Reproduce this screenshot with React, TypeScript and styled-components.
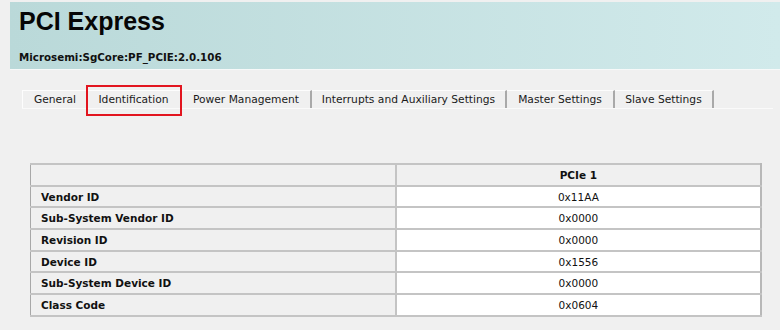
import React from "react";
import styled, { createGlobalStyle } from "styled-components";

const GlobalStyle = createGlobalStyle`
  html, body {
    margin: 0;
    padding: 0;
    background: #f0f0f0;
  }
  * { box-sizing: border-box; }
`;

const Page = styled.div`
  width: 780px;
  height: 330px;
  padding: 2px 0 0 10px;
  background: #f0f0f0;
  overflow: hidden;
`;

const Header = styled.header`
  height: 68px;
  padding: 5px 9px 0;
  background: linear-gradient(to right, #bad9d9, #d1eaeb);
  border-bottom: 1px solid #f7f9f9;
`;

const Title = styled.h1`
  margin: 0;
  font-family: "Liberation Sans", Arial, sans-serif;
  font-weight: bold;
  font-size: 25px;
  line-height: 29px;
  color: #060606;
`;

const Subtitle = styled.div`
  margin-top: 15px;
  font-family: "DejaVu Sans", Verdana, sans-serif;
  font-weight: bold;
  font-size: 10.3px;
  line-height: 13px;
  color: #111;
`;

const TabBar = styled.nav`
  display: flex;
  margin: 20px 0 0 12px;
  width: 751px;
  border-bottom: 1px solid #fafafa;
`;

const Tab = styled.div<{ $w: number; $first?: boolean; $noDivider?: boolean; $selected?: boolean }>`
  position: relative;
  width: ${(p) => p.$w}px;
  height: 18px;
  border-top: 1px solid #fdfdfd;
  border-left: ${(p) => (p.$first ? "1px solid #fdfdfd" : "none")};
  border-right: ${(p) => (p.$noDivider ? "none" : "2px solid #a9a9a9")};
  font-family: "DejaVu Sans", Verdana, sans-serif;
  font-size: 10.7px;
  line-height: 18px;
  color: #1a1a1a;
  text-align: center;
  white-space: nowrap;

  ${(p) =>
    p.$selected &&
    `
    &::after {
      content: "";
      position: absolute;
      top: -6px;
      left: -1px;
      right: -2px;
      bottom: -8px;
      border: 2px solid #e2151f;
      pointer-events: none;
    }
  `}
`;

const Table = styled.table`
  margin: 54px 0 0 20px;
  width: 732px;
  border-collapse: collapse;
  border-left: 1px solid #a8a8a8;
  border-right: 2px solid #b8b8b8;
  border-bottom: 2px solid #c4c4c4;
  border-top: 2px solid #c4c4c4;
  font-family: "DejaVu Sans", Verdana, sans-serif;
  font-size: 10.5px;
  color: #111;
`;

const Row = styled.tr`
  height: 21.7px;
`;

const HeadCell = styled.th`
  width: 50%;
  padding: 0;
  background: #f0f0f0;
  font-weight: bold;
  text-align: center;
  border-bottom: 2px solid #c4c4c4;
  border-left: 2px solid #c4c4c4;

  &:first-child {
    border-left: none;
  }
`;

const LabelCell = styled.td`
  padding: 0 0 0 10px;
  background: #f0f0f0;
  font-weight: bold;
  text-align: left;
  border-bottom: 2px solid #c4c4c4;
`;

const ValueCell = styled.td`
  padding: 0;
  background: #ffffff;
  text-align: center;
  border-bottom: 2px solid #c4c4c4;
  border-left: 2px solid #c4c4c4;
`;

const tabs = [
  { label: "General", w: 65, first: true, noDivider: true },
  { label: "Identification", w: 95, selected: true },
  { label: "Power Management", w: 130 },
  { label: "Interrupts and Auxiliary Settings", w: 195 },
  { label: "Master Settings", w: 108 },
  { label: "Slave Settings", w: 99 },
];

const rows = [
  ["Vendor ID", "0x11AA"],
  ["Sub-System Vendor ID", "0x0000"],
  ["Revision ID", "0x0000"],
  ["Device ID", "0x1556"],
  ["Sub-System Device ID", "0x0000"],
  ["Class Code", "0x0604"],
];

export default function App() {
  return (
    <>
      <GlobalStyle />
      <Page>
        <Header>
          <Title>PCI Express</Title>
          <Subtitle>Microsemi:SgCore:PF_PCIE:2.0.106</Subtitle>
        </Header>
        <TabBar>
          {tabs.map((t) => (
            <Tab
              key={t.label}
              $w={t.w}
              $first={t.first}
              $noDivider={t.noDivider}
              $selected={t.selected}
            >
              {t.label}
            </Tab>
          ))}
        </TabBar>
        <Table>
          <thead>
            <Row>
              <HeadCell></HeadCell>
              <HeadCell>PCIe 1</HeadCell>
            </Row>
          </thead>
          <tbody>
            {rows.map(([label, value]) => (
              <Row key={label}>
                <LabelCell>{label}</LabelCell>
                <ValueCell>{value}</ValueCell>
              </Row>
            ))}
          </tbody>
        </Table>
      </Page>
    </>
  );
}
